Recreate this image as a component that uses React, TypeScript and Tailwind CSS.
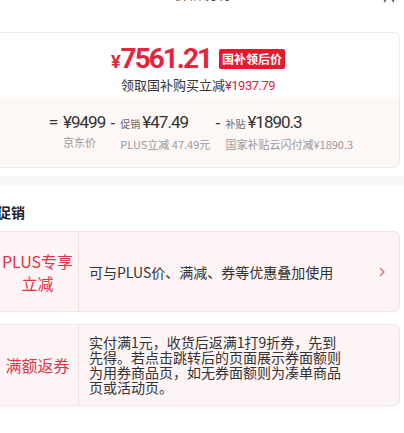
const cjk = "font-['Noto_Sans_CJK_SC','Noto_Sans',sans-serif]"
const num = "font-['Roboto','Noto_Sans_CJK_SC',sans-serif]"

function PriceCard() {
  return (
    <section className="mr-[4px] overflow-hidden rounded-[6px] border border-[#f1e9e9] bg-white">
      <div className="flex h-[64px] flex-col items-center pt-[10px]">
        <div className="flex items-center gap-[5px]">
          <p className={`flex items-baseline text-[#e5233b] ${num} font-bold`}>
            <span className="text-[18px]">¥</span>
            <span className="text-[28px] leading-[32px] tracking-[-2px]">7561.21</span>
          </p>
          <span
            className={`ml-[3px] rounded-[2px] bg-[#e8192c] px-[3px] text-[12px] leading-[20px] font-bold text-white ${cjk}`}
          >
            国补领后价
          </span>
        </div>
        <p className={`mt-[2px] text-[13px] leading-[16px] text-[#333] ${cjk}`}>
          领取国补购买立减
          <span className={`${num} text-[13px] tracking-[-0.5px] text-[#e5233b]`}>¥1937.79</span>
        </p>
      </div>
      <div className="flex h-[70px] items-start justify-center gap-[5px] bg-[#fdf7f6] pt-[14px] pl-[6px]">
        <span className="text-[16px] leading-[22px] text-[#333]">=</span>
        <PriceColumn value="¥9499" label="京东价" />
        <span className="text-[16px] leading-[22px] text-[#333]">-</span>
        <PriceColumn tag="促销" value="¥47.49" label="PLUS立减 47.49元" />
        <span className="text-[16px] leading-[22px] text-[#333]">-</span>
        <PriceColumn tag="补贴" value="¥1890.3" label="国家补贴云闪付减¥1890.3" />
      </div>
    </section>
  )
}

function PriceColumn({ tag, value, label }: { tag?: string; value: string; label: string }) {
  return (
    <div className="flex flex-col">
      <p className="flex items-baseline gap-[2px] leading-[22px]">
        {tag && <span className={`text-[10px] text-[#666] ${cjk}`}>{tag}</span>}
        <span className={`text-[17px] tracking-[-1px] text-[#333] ${num}`}>{value}</span>
      </p>
      <p className={`mt-[2px] text-[11px] leading-[14px] text-[#999] ${cjk}`}>{label}</p>
    </div>
  )
}

function PromoRow({
  title,
  children,
  arrow,
  className,
}: {
  title: React.ReactNode
  children: React.ReactNode
  arrow?: boolean
  className: string
}) {
  return (
    <div
      className={`mr-[4px] flex overflow-hidden rounded-[6px] border border-[#f6e3e6] bg-[#fdf4f5] ${className}`}
    >
      <div
        className={`flex w-[82px] shrink-0 items-center justify-center border-r border-[#f3dde1] text-center text-[16px] leading-[22px] text-[#e2334c] ${cjk}`}
      >
        {title}
      </div>
      <div className={`flex flex-1 items-center pr-[52px] pl-[10px] text-[14px] text-[#333] ${cjk}`}>
        {children}
      </div>
      {arrow && (
        <div className="flex w-[0px] items-center">
          <svg className="-ml-[20px] shrink-0" width="7" height="10" viewBox="0 0 7 10" fill="none">
            <path d="M1.5 1.5L5 5L1.5 8.5" stroke="#d46a7c" strokeWidth="1.4" strokeLinecap="round" strokeLinejoin="round" />
          </svg>
        </div>
      )}
    </div>
  )
}

export default function App() {
  return (
    <div className="h-[433px] w-[404px] overflow-hidden bg-white">
      <div className="relative flex h-[32px] justify-center">
        <p className={`-mt-[17px] text-[14px] leading-[20px] text-[#444] ${cjk}`}>价格说明</p>
        <svg className="absolute top-[-11px] right-[9px]" width="12" height="14" viewBox="0 0 12 14">
          <path d="M1 1L11 13M11 1L1 13" stroke="#555" strokeWidth="1.4" />
        </svg>
      </div>
      <div className="-ml-[4px] w-[408px]">
        <PriceCard />
        <div className="mt-[8px] h-[10px] bg-[#f7f7f7]" />
        <h2 className={`pt-[16px] pl-[1px] text-[14px] leading-[20px] font-bold text-[#222] ${cjk}`}>
          促销
        </h2>
        <PromoRow
          className="mt-[9px] h-[81px]"
          arrow
          title={
            <span>
              PLUS专享
              <br />
              立减
            </span>
          }
        >
          <span className="leading-[20px]">可与PLUS价、满减、券等优惠叠加使用</span>
        </PromoRow>
        <PromoRow className="mt-[12px] h-[82px]" title="满额返券">
          <span className="leading-[15px]">
            实付满1元，收货后返满1打9折券，先到先得。若点击跳转后的页面展示券面额则为用券商品页，如无券面额则为凑单商品页或活动页。
          </span>
        </PromoRow>
      </div>
    </div>
  )
}
